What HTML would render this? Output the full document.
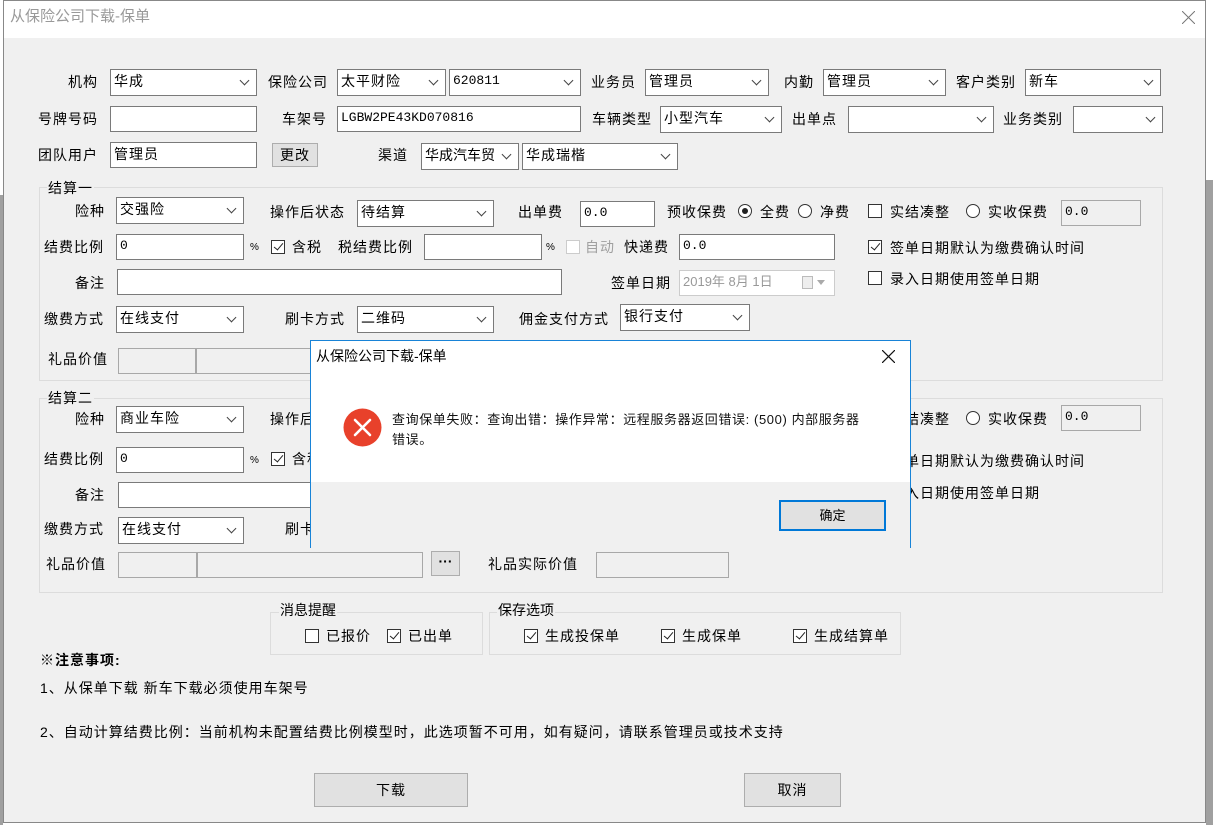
<!DOCTYPE html>
<html><head><meta charset="utf-8">
<style>
*{box-sizing:border-box;margin:0;padding:0}
body{width:1213px;height:825px;overflow:hidden;background:#fff;position:relative;font-family:"Liberation Sans","Noto Sans CJK SC","Microsoft YaHei",sans-serif;font-size:14px;color:#000}
.a{position:absolute;white-space:nowrap}
#win{position:absolute;left:3px;top:0;width:1203px;height:823px;background:#f0f0f0;border:1px solid #888}
#tb{position:absolute;left:0;top:0;right:0;height:37px;background:#fff}
.l{position:absolute;white-space:nowrap;font-size:14px;line-height:18px;letter-spacing:1px}
.box{position:absolute;background:#fff;border:1px solid #7a7a7a;font-size:14px;line-height:22px;padding-left:3px;overflow:hidden;white-space:nowrap;letter-spacing:1px}
.cb{position:absolute;background:#fff;border:1px solid #7a7a7a;font-size:14px;line-height:22px;padding-left:3px;overflow:hidden;white-space:nowrap;letter-spacing:1px}
.cb:after{content:"";position:absolute;right:8px;top:7px;width:6px;height:6px;border-right:1px solid #444;border-bottom:1px solid #444;transform:rotate(45deg)}
.dis{background:#f0f0f0;border-color:#a8a8a8}
.chk{position:absolute;width:14px;height:14px;border:1px solid #333;background:#fff}
.chk.on:after{content:"";position:absolute;left:4px;top:0px;width:4px;height:8px;border-right:1.5px solid #222;border-bottom:1.5px solid #222;transform:rotate(40deg)}
.rad{position:absolute;width:14px;height:14px;border:1px solid #333;border-radius:50%;background:#fff}
.rad.on:after{content:"";position:absolute;left:3px;top:3px;width:6px;height:6px;border-radius:50%;background:#222}
.grp{position:absolute;border:1px solid #dcdcdc}
.leg{position:absolute;background:#f0f0f0;padding:0 1px;font-size:14px;line-height:16px;letter-spacing:1px}
.btn{position:absolute;background:#e1e1e1;border:1px solid #adadad;text-align:center;font-size:14px;letter-spacing:1px}
.mono{font-family:"Liberation Mono",monospace;font-size:13px;letter-spacing:0}
</style></head><body>
<div class="a" style="left:0;top:0;width:3px;height:195px;background:#fff"></div>
<div class="a" style="left:0;top:195px;width:3px;height:630px;background:#a0a0a0"></div>
<div class="a" style="left:1206px;top:180px;width:7px;height:645px;background:#a0a0a0"></div>
<div id="win">
<div id="tb"></div>
</div>
<div class="l" style="left:10px;top:8px;color:#999;font-size:15px;letter-spacing:0">从保险公司下载-保单</div>
<svg class="a" style="left:1182px;top:11px" width="13" height="13"><path d="M0 0L13 13M13 0L0 13" stroke="#777" stroke-width="1"/></svg>

<div class="l" style="left:68px;top:73px">机构</div>
<div class="cb" style="left:110px;top:69px;width:147px;height:27px">华成</div>
<div class="l" style="left:268px;top:73px">保险公司</div>
<div class="cb" style="left:337px;top:69px;width:109px;height:27px">太平财险</div>
<div class="cb mono" style="left:449px;top:69px;width:132px;height:27px">620811</div>
<div class="l" style="left:591px;top:73px">业务员</div>
<div class="cb" style="left:645px;top:69px;width:124px;height:27px">管理员</div>
<div class="l" style="left:784px;top:73px">内勤</div>
<div class="cb" style="left:823px;top:69px;width:123px;height:27px">管理员</div>
<div class="l" style="left:956px;top:73px">客户类别</div>
<div class="cb" style="left:1025px;top:69px;width:136px;height:27px">新车</div>

<div class="l" style="left:38px;top:110px">号牌号码</div>
<div class="box" style="left:110px;top:106px;width:147px;height:26px"></div>
<div class="l" style="left:282px;top:110px">车架号</div>
<div class="box mono" style="left:337px;top:106px;width:244px;height:26px">LGBW2PE43KD070816</div>
<div class="l" style="left:592px;top:110px">车辆类型</div>
<div class="cb" style="left:660px;top:106px;width:122px;height:27px">小型汽车</div>
<div class="l" style="left:792px;top:110px">出单点</div>
<div class="cb" style="left:848px;top:106px;width:146px;height:27px"></div>
<div class="l" style="left:1003px;top:110px">业务类别</div>
<div class="cb" style="left:1073px;top:106px;width:90px;height:27px"></div>

<div class="l" style="left:38px;top:146px">团队用户</div>
<div class="box" style="left:110px;top:142px;width:147px;height:26px">管理员</div>
<div class="btn" style="left:272px;top:143px;width:46px;height:24px;line-height:22px">更改</div>
<div class="l" style="left:378px;top:146px">渠道</div>
<div class="cb" style="left:421px;top:143px;width:98px;height:27px;letter-spacing:0">华成汽车贸</div>
<div class="cb" style="left:522px;top:143px;width:156px;height:27px">华成瑞楷</div>

<div class="grp" style="left:39px;top:187px;width:1124px;height:194px"></div>
<div class="leg" style="left:47px;top:180px">结算一</div>
<div class="l" style="left:75px;top:202px">险种</div>
<div class="cb" style="left:116px;top:197px;width:128px;height:27px">交强险</div>
<div class="l" style="left:270px;top:203px">操作后状态</div>
<div class="cb" style="left:357px;top:200px;width:137px;height:27px">待结算</div>
<div class="l" style="left:518px;top:203px">出单费</div>
<div class="box mono" style="left:580px;top:201px;width:75px;height:26px">0.0</div>
<div class="l" style="left:667px;top:203px">预收保费</div>
<div class="rad on" style="left:738px;top:204px"></div>
<div class="l" style="left:760px;top:203px">全费</div>
<div class="rad" style="left:798px;top:204px"></div>
<div class="l" style="left:820px;top:203px">净费</div>
<div class="chk" style="left:868px;top:204px"></div>
<div class="l" style="left:890px;top:203px">实结凑整</div>
<div class="rad" style="left:966px;top:204px"></div>
<div class="l" style="left:988px;top:203px">实收保费</div>
<div class="box mono dis" style="left:1061px;top:200px;width:80px;height:26px">0.0</div>

<div class="l" style="left:44px;top:238px">结费比例</div>
<div class="box mono" style="left:116px;top:234px;width:128px;height:26px">0</div>
<div class="l" style="left:250px;top:239px;font-size:10px">%</div>
<div class="chk on" style="left:271px;top:240px"></div>
<div class="l" style="left:292px;top:238px">含税</div>
<div class="l" style="left:338px;top:238px">税结费比例</div>
<div class="box" style="left:424px;top:234px;width:118px;height:26px"></div>
<div class="l" style="left:546px;top:239px;font-size:10px">%</div>
<div class="chk" style="left:566px;top:240px;border-color:#ccc"></div>
<div class="l" style="left:585px;top:238px;color:#a0a0a0">自动</div>
<div class="l" style="left:624px;top:238px">快递费</div>
<div class="box mono" style="left:679px;top:234px;width:156px;height:26px">0.0</div>
<div class="chk on" style="left:868px;top:240px"></div>
<div class="l" style="left:890px;top:239px">签单日期默认为缴费确认时间</div>

<div class="l" style="left:75px;top:274px">备注</div>
<div class="box" style="left:117px;top:269px;width:445px;height:26px"></div>
<div class="l" style="left:611px;top:274px">签单日期</div>
<div class="box" style="left:679px;top:270px;width:156px;height:26px;border-color:#ccc;color:#999;font-size:13px;letter-spacing:0">2019年 8月 1日</div>
<div class="a" style="left:802px;top:276px;width:11px;height:13px;border:1px solid #bbb;background:#eee"></div>
<div class="a" style="left:817px;top:280px;width:0;height:0;border-left:4px solid transparent;border-right:4px solid transparent;border-top:5px solid #aaa"></div>
<div class="chk" style="left:868px;top:271px"></div>
<div class="l" style="left:890px;top:270px">录入日期使用签单日期</div>

<div class="l" style="left:44px;top:310px">缴费方式</div>
<div class="cb" style="left:116px;top:306px;width:128px;height:27px">在线支付</div>
<div class="l" style="left:285px;top:310px">刷卡方式</div>
<div class="cb" style="left:357px;top:306px;width:137px;height:27px">二维码</div>
<div class="l" style="left:519px;top:310px">佣金支付方式</div>
<div class="cb" style="left:620px;top:304px;width:130px;height:27px">银行支付</div>

<div class="l" style="left:48px;top:350px">礼品价值</div>
<div class="box dis" style="left:118px;top:348px;width:78px;height:26px"></div>
<div class="box dis" style="left:196px;top:348px;width:226px;height:26px"></div>

<div class="grp" style="left:39px;top:398px;width:1124px;height:195px"></div>
<div class="leg" style="left:47px;top:390px">结算二</div>
<div class="l" style="left:75px;top:410px">险种</div>
<div class="cb" style="left:116px;top:406px;width:128px;height:27px">商业车险</div>
<div class="l" style="left:270px;top:410px">操作后状态</div>
<div class="l" style="left:44px;top:450px">结费比例</div>
<div class="box mono" style="left:116px;top:447px;width:128px;height:26px">0</div>
<div class="l" style="left:250px;top:452px;font-size:10px">%</div>
<div class="chk on" style="left:271px;top:452px"></div>
<div class="l" style="left:292px;top:450px">含税</div>
<div class="l" style="left:75px;top:486px">备注</div>
<div class="box" style="left:118px;top:482px;width:400px;height:26px"></div>
<div class="l" style="left:44px;top:520px">缴费方式</div>
<div class="cb" style="left:118px;top:517px;width:126px;height:27px">在线支付</div>
<div class="l" style="left:285px;top:520px">刷卡方式</div>
<div class="l" style="left:46px;top:555px">礼品价值</div>
<div class="box dis" style="left:118px;top:552px;width:79px;height:26px"></div>
<div class="box dis" style="left:197px;top:552px;width:226px;height:26px"></div>
<div class="btn" style="left:431px;top:551px;width:29px;height:25px;line-height:18px;font-weight:bold;letter-spacing:0">···</div>
<div class="l" style="left:488px;top:555px">礼品实际价值</div>
<div class="box dis" style="left:596px;top:552px;width:133px;height:26px"></div>
<div class="l" style="left:890px;top:410px">实结凑整</div>
<div class="rad" style="left:966px;top:411px"></div>
<div class="l" style="left:988px;top:410px">实收保费</div>
<div class="box mono dis" style="left:1061px;top:405px;width:80px;height:26px">0.0</div>
<div class="chk on" style="left:868px;top:454px"></div>
<div class="l" style="left:890px;top:452px">签单日期默认为缴费确认时间</div>
<div class="chk" style="left:868px;top:484px"></div>
<div class="l" style="left:890px;top:484px">录入日期使用签单日期</div>

<div class="grp" style="left:270px;top:612px;width:213px;height:43px"></div>
<div class="leg" style="left:279px;top:602px;letter-spacing:0">消息提醒</div>
<div class="chk" style="left:305px;top:629px"></div>
<div class="l" style="left:326px;top:627px">已报价</div>
<div class="chk on" style="left:387px;top:629px"></div>
<div class="l" style="left:408px;top:627px">已出单</div>
<div class="grp" style="left:489px;top:612px;width:412px;height:43px"></div>
<div class="leg" style="left:497px;top:602px;letter-spacing:0">保存选项</div>
<div class="chk on" style="left:524px;top:629px"></div>
<div class="l" style="left:545px;top:627px">生成投保单</div>
<div class="chk on" style="left:661px;top:629px"></div>
<div class="l" style="left:682px;top:627px">生成保单</div>
<div class="chk on" style="left:793px;top:629px"></div>
<div class="l" style="left:814px;top:627px">生成结算单</div>

<div class="l" style="left:40px;top:651px;font-weight:bold">※注意事项:</div>
<div class="l" style="left:40px;top:679px">1、从保单下载 新车下载必须使用车架号</div>
<div class="l" style="left:40px;top:723px">2、自动计算结费比例：当前机构未配置结费比例模型时，此选项暂不可用，如有疑问，请联系管理员或技术支持</div>

<div class="btn" style="left:314px;top:773px;width:154px;height:34px;line-height:32px">下载</div>
<div class="btn" style="left:744px;top:773px;width:97px;height:34px;line-height:32px">取消</div>

<div class="a" style="left:310px;top:340px;width:601px;height:208px;background:#f0f0f0;border:1px solid #1883d7;border-bottom:none"></div>
<div class="a" style="left:311px;top:341px;width:599px;height:141px;background:#fff"></div>
<div class="l" style="left:316px;top:347px;font-size:14px;letter-spacing:0">从保险公司下载-保单</div>
<svg class="a" style="left:882px;top:350px" width="13" height="13"><path d="M0 0L13 13M13 0L0 13" stroke="#111" stroke-width="1.2"/></svg>
<svg class="a" style="left:343px;top:408px" width="39" height="39"><circle cx="19.5" cy="19.5" r="19" fill="#e8412b"/><path d="M12 12L27 27M27 12L12 27" stroke="#fff" stroke-width="2.6" stroke-linecap="round"/></svg>
<div class="l" style="left:392px;top:410px;font-size:13px;line-height:20px;color:#111;letter-spacing:0.6px">查询保单失败：查询出错：操作异常：远程服务器返回错误: (500) 内部服务器<br>错误。</div>
<div class="a" style="left:779px;top:500px;width:107px;height:31px;background:#e1e1e1;border:2px solid #0078d7;text-align:center;line-height:27px;font-size:13px">确定</div>
</body></html>
